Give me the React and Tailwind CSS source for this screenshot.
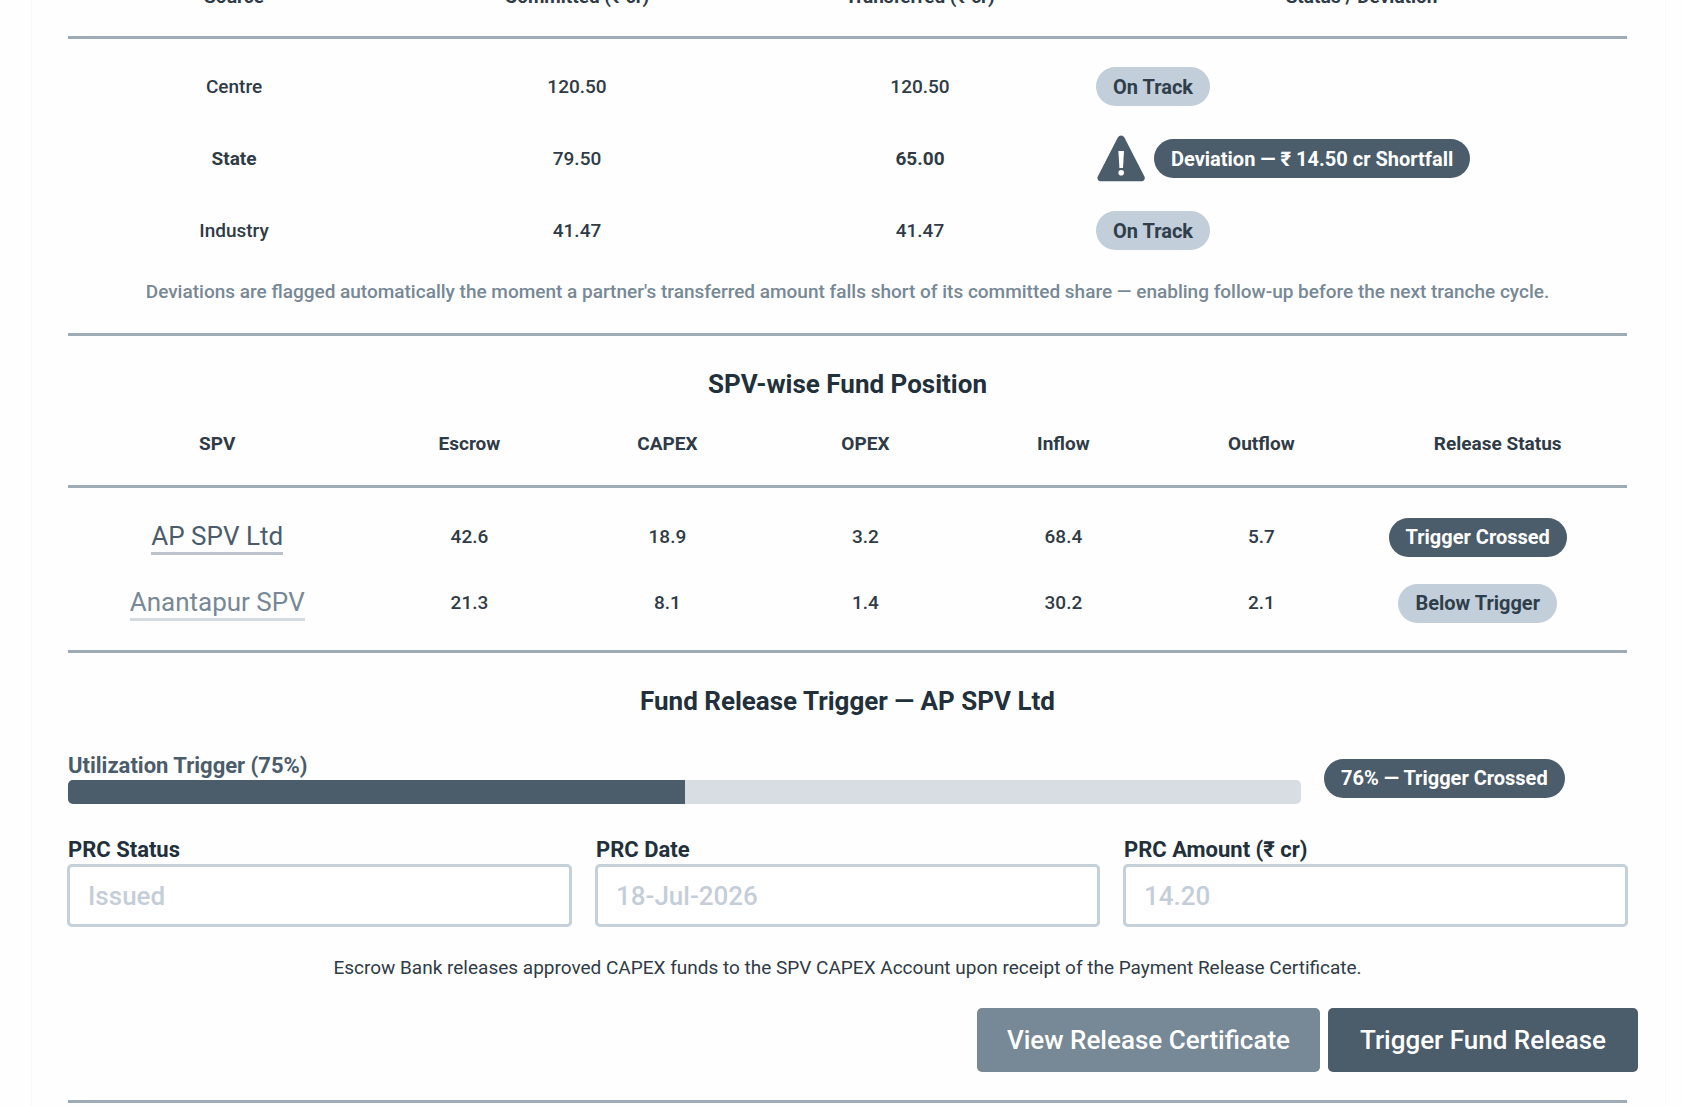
import React, { useState } from "react";

const contributions = [
  { source: "Centre", committed: "120.50", transferred: "120.50" },
  { source: "State", committed: "79.50", transferred: "65.00", shortfall: "14.50" },
  { source: "Industry", committed: "41.47", transferred: "41.47" },
];

const spvs = [
  { name: "AP SPV Ltd", values: ["42.6", "18.9", "3.2", "68.4", "5.7"], crossed: true },
  { name: "Anantapur SPV", values: ["21.3", "8.1", "1.4", "30.2", "2.1"], crossed: false },
];

const Badge = ({ dark, children }) => (
  <span
    className={`inline-flex h-[39px] items-center whitespace-nowrap rounded-full px-[17px] text-[20px] font-bold ${
      dark ? "bg-[#4b5c6b] text-white" : "bg-[#c2ced9] text-[#2f3e4b]"
    }`}
  >
    {children}
  </span>
);

const WarningIcon = () => (
  <svg viewBox="0 0 50 47" className="h-[47px] w-[50px] shrink-0" aria-hidden="true">
    <path
      d="M21.8 2.4a3.8 3.8 0 0 1 6.6 0l20 39.2a3.2 3.2 0 0 1-2.9 4.7H4.7a3.2 3.2 0 0 1-2.9-4.7z"
      fill="#4b5c6b"
    />
    <path d="M22.4 16h5.6l-1 17h-3.6z" fill="#fff" />
    <circle cx="25.2" cy="37.8" r="2.8" fill="#fff" />
  </svg>
);

const Rule = ({ className }) => <hr className={`border-t-3 border-[#9facb8] ${className}`} />;

const Heading = ({ children }) => (
  <h2 className="mt-[30px] pb-px text-center text-[26px] leading-9 font-bold text-[#22303c]">{children}</h2>
);

const Field = ({ id, label, value, onChange }) => (
  <div>
    <label htmlFor={id} className="block pl-px text-[22px] leading-7 font-bold text-[#22303c]">
      {label}
    </label>
    <input
      id={id}
      name={id}
      value={value}
      onChange={onChange}
      className="block h-[63px] w-full rounded-[5px] border-3 border-[#c5d0d9] bg-white px-[18px] text-[26px] font-medium text-[#c5ced8] outline-none"
    />
  </div>
);

const ContributionTable = () => (
  <table className="w-full table-fixed text-center text-[19px] leading-7">
    <thead className="border-b-3 border-[#9facb8]">
      <tr className="h-[84px] font-bold">
        <th className="w-[21.3%] pt-1.5">Source</th>
        <th className="w-[22.7%] pt-1.5">Committed (₹ cr)</th>
        <th className="w-[21.3%] pt-1.5">Transferred (₹ cr)</th>
        <th className="pt-1.5 pl-2.5">Status / Deviation</th>
      </tr>
    </thead>
    <tbody className="before:block before:h-3">
      {contributions.map((row) => (
        <tr key={row.source} className="h-[72px]">
          <td className={row.shortfall ? "font-bold" : "font-medium"}>{row.source}</td>
          <td className="font-medium">{row.committed}</td>
          <td className={row.shortfall ? "font-bold" : "font-medium"}>{row.transferred}</td>
          <td className="pl-2.5">
            <div className="flex items-center gap-2">
              {row.shortfall ? (
                <>
                  <WarningIcon />
                  <Badge dark>Deviation — ₹ {row.shortfall} cr Shortfall</Badge>
                </>
              ) : (
                <Badge>On Track</Badge>
              )}
            </div>
          </td>
        </tr>
      ))}
    </tbody>
  </table>
);

const SpvTable = () => (
  <table className="w-full table-fixed text-center text-[19px] leading-7">
    <thead className="border-b-3 border-[#9facb8]">
      <tr className="h-[84px] font-bold">
        <th className="w-[19.4%] pr-1">SPV</th>
        <th className="w-[12.7%]">Escrow</th>
        <th className="w-[12.7%]">CAPEX</th>
        <th className="w-[12.7%]">OPEX</th>
        <th className="w-[12.7%]">Inflow</th>
        <th className="w-[12.7%]">Outflow</th>
        <th className="pl-2">Release Status</th>
      </tr>
    </thead>
    <tbody className="before:block before:h-4">
      {spvs.map((spv) => (
        <tr key={spv.name} className="h-[66px]">
          <td className="pr-1">
            <a
              href="#"
              className={`inline-block border-b-3 text-[26px] leading-8 ${
                spv.crossed ? "border-[#bcc3ca] text-[#4b5c6b]" : "border-[#d3dae0] text-[#778896]"
              }`}
            >
              {spv.name}
            </a>
          </td>
          {spv.values.map((value, index) => (
            <td key={index} className="font-medium">
              {value}
            </td>
          ))}
          <td className="pr-8">
            <Badge dark={spv.crossed}>{spv.crossed ? "Trigger Crossed" : "Below Trigger"}</Badge>
          </td>
        </tr>
      ))}
    </tbody>
  </table>
);

const App = () => {
  const [prc, setPrc] = useState({ status: "Issued", date: "18-Jul-2026", amount: "14.20" });

  const handleChange = (key) => (e) => setPrc({ ...prc, [key]: e.target.value });

  return (
    <div className="flex min-h-screen overflow-hidden bg-[#fefefe] pr-4 pl-[31px] font-['Roboto',sans-serif] text-[#2f3b47]">
      {/* the panel is scrolled, so its first header row is cut by the top edge */}
      <main className="-mt-[47px] min-w-0 flex-1 border-x border-[#f8f9fa] pr-[38px] pl-9">
        <ContributionTable />
        <p className="mt-[11px] text-center text-[19px] leading-7 font-medium text-[#778896]">
          Deviations are flagged automatically the moment a partner's transferred amount falls short of
          its committed share — enabling follow-up before the next tranche cycle.
        </p>
        <Rule className="mt-[27px]" />

        <Heading>SPV-wise Fund Position</Heading>
        <SpvTable />
        <Rule className="mt-3.5" />

        <Heading>Fund Release Trigger — AP SPV Ltd</Heading>
        <div className="mt-8 flex items-center gap-[23px]">
          <div className="flex-1">
            <div id="utilization" className="text-[22px] leading-7 font-bold text-[#4b5c6b]">
              Utilization Trigger (75%)
            </div>
            <div
              role="progressbar"
              aria-labelledby="utilization"
              aria-valuenow={50}
              className="h-6 overflow-hidden rounded-[5px] bg-[#d8dde4]"
            >
              <div className="h-full w-1/2 bg-[#4b5c6b]" />
            </div>
          </div>
          <div className="flex w-[303px]">
            <Badge dark>76% — Trigger Crossed</Badge>
          </div>
        </div>

        <div className="-mx-px mt-8 grid grid-cols-3 gap-[23px]">
          <Field id="status" label="PRC Status" value={prc.status} onChange={handleChange("status")} />
          <Field id="date" label="PRC Date" value={prc.date} onChange={handleChange("date")} />
          <Field id="amount" label="PRC Amount (₹ cr)" value={prc.amount} onChange={handleChange("amount")} />
        </div>

        <p className="mt-[27px] text-center text-[19px] leading-7">
          Escrow Bank releases approved CAPEX funds to the SPV CAPEX Account upon receipt of the Payment
          Release Certificate.
        </p>
        <div className="-mr-[11px] mt-[26px] flex justify-end gap-2">
          <button type="button" className="h-16 w-[343px] rounded-[5px] bg-[#778896] text-[26px] font-medium text-white">
            View Release Certificate
          </button>
          <button type="button" className="h-16 w-[310px] rounded-[5px] bg-[#4b5c6b] text-[26px] font-medium text-white">
            Trigger Fund Release
          </button>
        </div>
        <Rule className="mt-7" />
      </main>
    </div>
  );
};

export default App;
